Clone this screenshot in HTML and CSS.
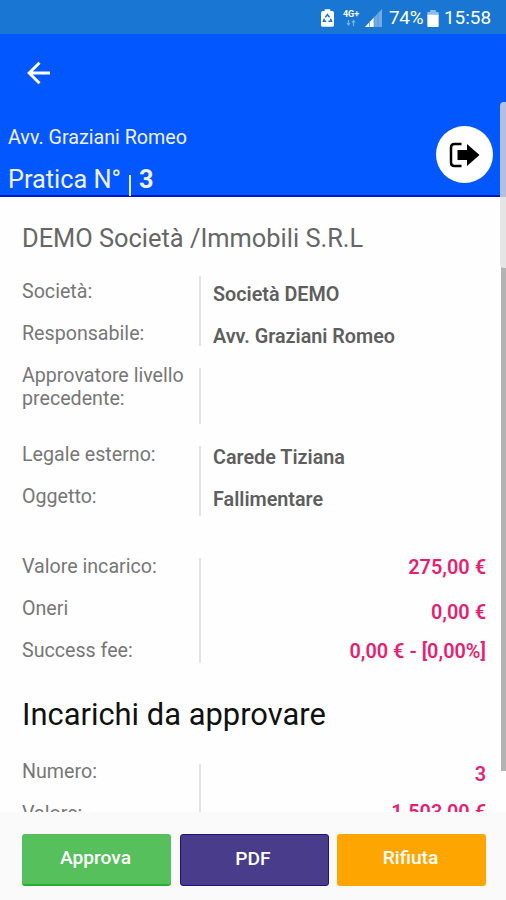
FILE: index.html
```html
<!DOCTYPE html>
<html lang="it">
<head>
<meta charset="utf-8">
<title>Pratica N° 3</title>
<link rel="stylesheet" href="styles.css">
</head>
<body>
<div class="screen">
  <div class="status">
    <svg class="recycle" width="13" height="18" viewBox="0 0 14 19"><path d="M4 0h6v2h2q2 0 2 2v13q0 2-2 2H2q-2 0-2-2V4q0-2 2-2h2z" fill="#fff"/><path d="M4.7 8.8 6.9 5.7l2.3 3.1M3.7 10.2l-1 2.8h3M10.3 10.2l1 2.8H8" fill="none" stroke="#1976d2" stroke-width="1.7"/></svg>
    <div class="network"><span>4G+</span><svg width="10" height="6" viewBox="0 0 10 6"><path d="M2.5 0v4M1 3l1.5 2L4 3M7.5 6V1M6 2.500 7.500.5 9 2.500" fill="none" stroke="#72b5f0" stroke-width="1.200"/></svg></div>
    <svg class="signal" width="18" height="18" viewBox="0 0 18 18"><path d="M0 18 17 0v18z" fill="#70abe3"/><path d="M0 18 9 8.500V18z" fill="#fff"/><path d="M4.500 12v6M9 7v11M13 3v15" stroke="#4793dc" stroke-width=".7"/></svg>
    <span class="percent">74%</span>
    <svg class="battery" width="12" height="17" viewBox="0 0 12 18"><path d="M3 0h6v2h3v4H0V2h3z" fill="#8dbce9"/><path d="M0 5h12v12q0 1-1 1H1q-1 0-1-1z" fill="#fff"/></svg>
    <span class="time">15:58</span>
  </div>
  <header class="header">
    <svg class="back" width="24" height="24" viewBox="0 0 24 24"><path d="M23 12H2.500M12.500 1.700 2.200 12l10.300 10.300" fill="none" stroke="#fff" stroke-width="3"/></svg>
    <div class="heading">
      <div class="titles">
        <div class="owner">Avv. Graziani Romeo</div>
        <div class="case"><span class="case-label">Pratica N°</span><span class="case-line"></span><b class="case-number">3</b></div>
      </div>
      <div class="exit"><svg width="31" height="26" viewBox="0 0 31 26"><path d="M12.500 2H5.500Q2 2 2 5.500v15Q2 24 5.500 24h7" fill="none" stroke="#000" stroke-width="2.500"/><path d="M8.500 8H18V2l12.500 11L18 24v-6H8.500z" fill="#000"/></svg></div>
    </div>
  </header>
  <main class="content">
    <h1 class="company">DEMO Società /Immobili S.R.L</h1>
    <section class="group subject">
      <div class="labels"><span>Società:</span><span>Responsabile:</span></div>
      <div class="values"><b>Società DEMO</b><b>Avv. Graziani Romeo</b></div>
    </section>
    <section class="group approver">
      <div class="labels"><span>Approvatore livello precedente:</span></div>
      <div class="values"></div>
    </section>
    <section class="group matter">
      <div class="labels"><span>Legale esterno:</span><span>Oggetto:</span></div>
      <div class="values"><b>Carede Tiziana</b><b>Fallimentare</b></div>
    </section>
    <section class="group amounts">
      <div class="labels"><span>Valore incarico:</span><span>Oneri</span><span>Success fee:</span></div>
      <div class="values money"><b>275,00 €</b><b class="charges">0,00 €</b><b>0,00 € - [0,00%]</b></div>
    </section>
    <h2 class="pending">Incarichi da approvare</h2>
    <section class="group totals">
      <div class="labels"><span>Numero:</span><span>Valore:</span></div>
      <div class="values money"><b>3</b><b>1.503,00 €</b></div>
    </section>
  </main>
  <footer class="actions">
    <button class="btn approve">Approva</button>
    <button class="btn pdf">PDF</button>
    <button class="btn reject">Rifiuta</button>
  </footer>
  <div class="scrollbar"><div class="thumb"></div></div>
</div>
</body>
</html>
```
FILE: styles.css
```css
* { box-sizing: border-box; }
body { margin: 0; font-family: Roboto, "Liberation Sans", sans-serif; }
.screen { position: relative; width: 506px; height: 900px; overflow: hidden; background: #fefefe; display: flex; flex-direction: column; }

.status { height: 34px; flex: none; background: #1976d2; color: #fff; display: flex; align-items: center; padding: 2px 0 0 321px; font-size: 18.9px; line-height: 34px; white-space: nowrap; }
.network { width: 18px; margin-left: 8px; display: flex; flex-direction: column; align-items: center; gap: 1px; font-size: 9px; font-weight: 700; line-height: 9px; }
.signal { margin-left: 5px; }
.percent { width: 34px; margin-left: 6px; letter-spacing: -0.3px; }
.battery { margin-left: 4px; }
.time { margin-left: 5px; }

.header { height: 163px; flex: none; background: #0357ff; border-bottom: 2px solid #0014cc; color: #f0f1ff; padding: 27px 13px 0 8px; }
.back { display: block; margin-left: 19px; }
.heading { display: flex; justify-content: space-between; margin-top: 40px; }
.owner { padding-top: 1px; font-size: 19.7px; line-height: 24px; }
.case { display: flex; margin-top: 13px; height: 36px; font-size: 25.3px; line-height: 34px; }
.case-line { width: 2px; height: 21px; margin: 12px 8px 0 9px; background: #e8ecff; }
.case-label { width: 112px; white-space: nowrap; }
.exit { width: 57px; height: 57px; margin-top: 1px; border-radius: 50%; background: #fff; display: flex; align-items: center; justify-content: center; }

.content { height: 615px; flex: none; overflow: hidden; padding: 27px 20px 0 22px; }
.company { margin: 0 0 23px; font-size: 25.4px; font-weight: 400; line-height: 29px; color: #666; }
.group { display: flex; line-height: 23px; }
.labels { width: 179px; flex: none; border-right: 2px solid #e3e3e3; display: flex; flex-direction: column; gap: 19px; font-size: 19.65px; color: #777; }
.labels span { margin-top: -3px; margin-bottom: 3px; }
.values { flex: 1; padding-left: 12px; display: flex; flex-direction: column; gap: 19px; font-size: 19.75px; color: #5e5e5e; }
.values b { font-weight: 600; }
.money { align-items: flex-end; color: #e91e73; }
.money b { font-size: 19.9px; }
.subject { height: 70px; }
.subject .labels { padding-top: 7px; }
.subject .values { padding-top: 7px; }
.approver { height: 56px; margin-top: 22px; }
.approver .labels span { margin-top: -4px; }
.matter { height: 70px; margin-top: 22px; }
.amounts { height: 105px; margin-top: 42px; }
.amounts .values { margin-top: -2px; gap: 18px; }
.charges { margin-top: 4px; margin-bottom: -2px; }
.pending { margin: 35px 0 32px; font-size: 30.9px; font-weight: 400; line-height: 34px; color: #111; }
.totals { height: 70px; }
.totals .labels span { margin-top: -4px; margin-bottom: 4px; }
.totals .values { margin-top: -1px; gap: 15px; }

.actions { height: 88px; flex: none; background: #fafafa; display: grid; grid-template-columns: repeat(3, 149px); gap: 8.5px; padding: 22px 0 0 22px; align-items: start; }
.btn { height: 52px; border: 0; border-radius: 3px; color: #fff; font: 500 19.2px/48px Roboto, sans-serif; padding: 0 2px 4px 0; }
.approve { background: #56c05c; border-bottom: 2px solid #28ad32; }
.pdf { background: #483c8b; border: 1px solid #25107c; }
.reject { background: #ffa500; }

.scrollbar { position: absolute; right: 0; top: 102px; width: 5px; height: 669px; background: #b3b3b3; border-top-left-radius: 4px; }
.thumb { width: 6px; height: 166px; margin-left: -1px; border-radius: 4px 0 0 4px; background: linear-gradient(#b2bee3 95px, #e5e5e5 95px); }
```
